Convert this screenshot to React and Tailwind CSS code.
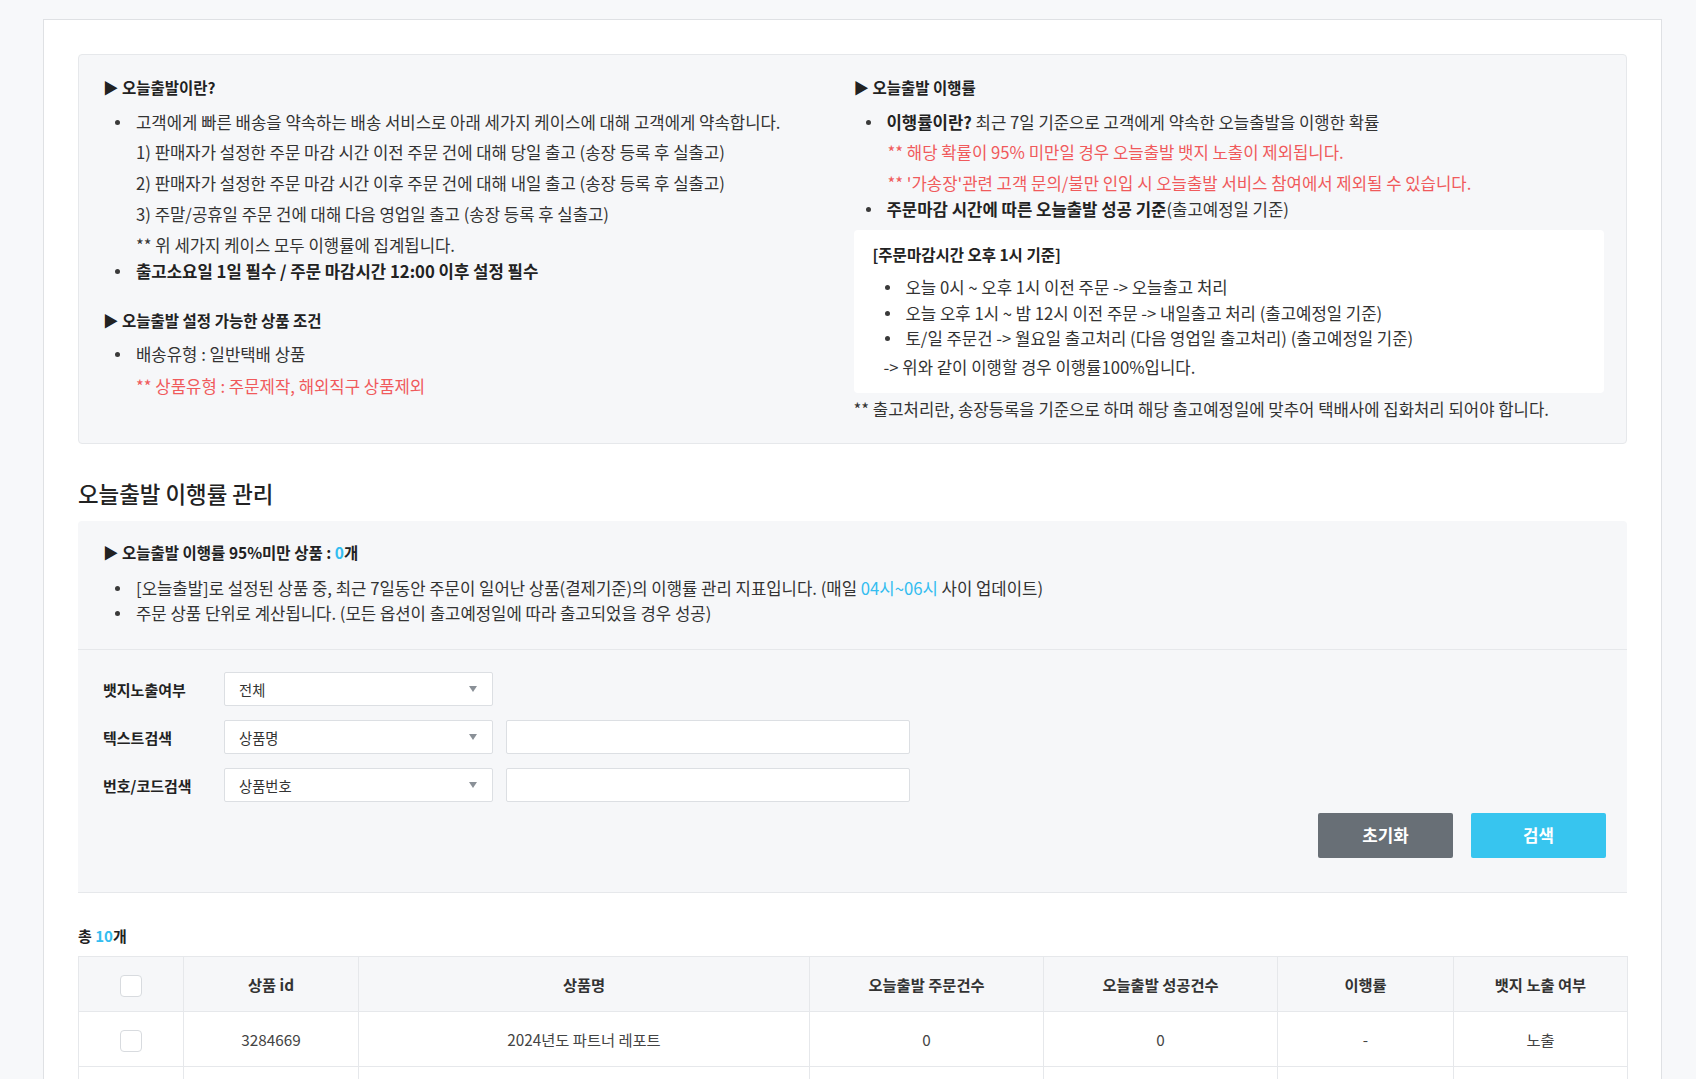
import { useState } from 'react'

const products = [
  { id: '3284669', name: '2024년도 파트너 레포트', orders: 0, success: 0, rate: '-', badge: '노출' },
  { id: '3284512', name: '2024년도 상반기 판매 가이드', orders: 0, success: 0, rate: '-', badge: '노출' },
  { id: '3281107', name: '파트너 교육 자료집', orders: 0, success: 0, rate: '-', badge: '노출' },
  { id: '3279954', name: '시즌 프로모션 키트', orders: 0, success: 0, rate: '-', badge: '노출' },
]

const columns = [
  { w: 'w-[105px]' },
  { w: 'w-[175px]', label: '상품 id' },
  { w: 'w-[451px]', label: '상품명' },
  { w: 'w-[234px]', label: '오늘출발 주문건수' },
  { w: 'w-[234px]', label: '오늘출발 성공건수' },
  { w: 'w-[176px]', label: '이행률' },
  { w: 'w-[174px]', label: '뱃지 노출 여부' },
]

function Bullet({ children, className = '' }) {
  return (
    <li className={`flex items-start ${className}`}>
      <span className="ml-[12px] mr-[16px] mt-[10px] h-[5px] w-[5px] shrink-0 rounded-full bg-[#3a3a3a]" />
      <span>{children}</span>
    </li>
  )
}

function Heading({ children, className = '' }) {
  return <p className={`text-[15.5px] font-bold text-[#222] ${className}`}>▶ {children}</p>
}

function SelectBox({ value }) {
  return (
    <div className="flex h-[34px] w-[269px] shrink-0 items-center justify-between rounded-[2px] border border-[#dcdfe3] bg-white pl-[14px] pr-[15px] text-[14.3px] text-[#333]">
      <span>{value}</span>
      <span className="h-0 w-0 border-x-[4px] border-t-[6px] border-x-transparent border-t-[#8a9097]" />
    </div>
  )
}

function Checkbox({ checked, onChange }) {
  return (
    <input
      type="checkbox"
      checked={checked}
      onChange={onChange}
      className="h-[22px] w-[22px] appearance-none rounded-[4px] border border-[#d8dbdf] bg-white align-middle"
    />
  )
}

export default function App() {
  const [selected, setSelected] = useState([])
  const [keyword, setKeyword] = useState('')
  const [code, setCode] = useState('')

  const toggle = id =>
    setSelected(s => (s.includes(id) ? s.filter(x => x !== id) : [...s, id]))

  return (
    <div className="h-screen overflow-hidden bg-[#f7f8fa] pl-[43px] pr-[34px] pt-[19px] font-['Noto_Sans_CJK_KR','Noto_Sans',sans-serif] text-[16.7px] leading-[25px] text-[#333]">
      <div className="border border-[#dfe1e4] bg-white px-[34px] pt-[34px] pb-[40px]">
        {/* 안내 박스 */}
        <div className="flex rounded-[4px] border border-[#e6e8eb] bg-[#f6f7f9] pl-[24px] pr-[22px] pt-[20px] pb-[21px]">
          <div className="w-1/2">
            <Heading>오늘출발이란?</Heading>
            <ul className="mt-[10px]">
              <Bullet>고객에게 빠른 배송을 약속하는 배송 서비스로 아래 세가지 케이스에 대해 고객에게 약속합니다.</Bullet>
            </ul>
            <div className="pl-[33px]">
              <p className="mt-[5px]">1) 판매자가 설정한 주문 마감 시간 이전 주문 건에 대해 당일 출고 (송장 등록 후 실출고)</p>
              <p className="mt-[6px]">2) 판매자가 설정한 주문 마감 시간 이후 주문 건에 대해 내일 출고 (송장 등록 후 실출고)</p>
              <p className="mt-[6px]">3) 주말/공휴일 주문 건에 대해 다음 영업일 출고 (송장 등록 후 실출고)</p>
              <p className="mt-[6px]">** 위 세가지 케이스 모두 이행률에 집계됩니다.</p>
            </div>
            <ul className="mt-[1px]">
              <Bullet className="font-bold text-[#222]">출고소요일 1일 필수 / 주문 마감시간 12:00 이후 설정 필수</Bullet>
            </ul>
            <Heading className="mt-[24px]">오늘출발 설정 가능한 상품 조건</Heading>
            <ul className="mt-[9px]">
              <Bullet>배송유형 : 일반택배 상품</Bullet>
            </ul>
            <p className="mt-[7px] pl-[33px] text-[#f05a5c]">** 상품유형 : 주문제작, 해외직구 상품제외</p>
          </div>

          <div className="w-1/2">
            <Heading>오늘출발 이행률</Heading>
            <ul className="mt-[10px]">
              <Bullet>
                <b className="text-[#222]">이행률이란?</b> 최근 7일 기준으로 고객에게 약속한 오늘출발을 이행한 확률
              </Bullet>
            </ul>
            <div className="pl-[34px] text-[#f05a5c]">
              <p className="mt-[5px]">** 해당 확률이 95% 미만일 경우 오늘출발 뱃지 노출이 제외됩니다.</p>
              <p className="mt-[6px]">** &apos;가송장&apos;관련 고객 문의/불만 인입 시 오늘출발 서비스 참여에서 제외될 수 있습니다.</p>
            </div>
            <ul className="mt-[1px]">
              <Bullet>
                <b className="text-[#222]">주문마감 시간에 따른 오늘출발 성공 기준</b>(출고예정일 기준)
              </Bullet>
            </ul>
            <div className="mt-[8px] rounded-[4px] bg-white px-[19px] pt-[12px] pb-[13px]">
              <p className="text-[15.5px] font-bold text-[#222]">[주문마감시간 오후 1시 기준]</p>
              <ul className="mt-[8px]">
                <Bullet>오늘 0시 ~ 오후 1시 이전 주문 -&gt; 오늘출고 처리</Bullet>
                <Bullet className="mt-[1px]">오늘 오후 1시 ~ 밤 12시 이전 주문 -&gt; 내일출고 처리 (출고예정일 기준)</Bullet>
                <Bullet>토/일 주문건 -&gt; 월요일 출고처리 (다음 영업일 출고처리) (출고예정일 기준)</Bullet>
              </ul>
              <p className="mt-[4px] pl-[11px]">-&gt; 위와 같이 이행할 경우 이행률100%입니다.</p>
            </div>
            <p className="mt-[4px]">** 출고처리란, 송장등록을 기준으로 하며 해당 출고예정일에 맞추어 택배사에 집화처리 되어야 합니다.</p>
          </div>
        </div>

        <h2 className="mt-[34px] text-[22.4px] font-medium leading-[30px] text-[#222]">오늘출발 이행률 관리</h2>

        {/* 검색 영역 */}
        <div className="mt-[13px] rounded-t-[4px] border-b border-[#e6e8eb] bg-[#f6f7f9]">
          <div className="border-b border-[#e6e8eb] px-[25px] pt-[19px] pb-[23px]">
            <Heading>
              오늘출발 이행률 95%미만 상품 : <span className="text-[#33bdf0]">0</span>개
            </Heading>
            <ul className="mt-[11px]">
              <Bullet>
                [오늘출발]로 설정된 상품 중, 최근 7일동안 주문이 일어난 상품(결제기준)의 이행률 관리 지표입니다. (매일{' '}
                <span className="text-[#33bdf0]">04시~06시</span> 사이 업데이트)
              </Bullet>
              <Bullet>주문 상품 단위로 계산됩니다. (모든 옵션이 출고예정일에 따라 출고되었을 경우 성공)</Bullet>
            </ul>
          </div>

          <div className="pl-[25px] pr-[21px] pt-[22px] pb-[34px] text-[15px]">
            <div className="flex flex-col gap-[14px]">
              <div className="flex items-center">
                <span className="w-[121px] font-bold text-[#222]">뱃지노출여부</span>
                <SelectBox value="전체" />
              </div>
              <div className="flex items-center gap-[13px]">
                <span className="-mr-[13px] w-[121px] font-bold text-[#222]">텍스트검색</span>
                <SelectBox value="상품명" />
                <input
                  value={keyword}
                  onChange={e => setKeyword(e.target.value)}
                  className="h-[34px] w-[404px] rounded-[2px] border border-[#dcdfe3] bg-white px-3 text-[14px] outline-none"
                />
              </div>
              <div className="flex items-center gap-[13px]">
                <span className="-mr-[13px] w-[121px] font-bold text-[#222]">번호/코드검색</span>
                <SelectBox value="상품번호" />
                <input
                  value={code}
                  onChange={e => setCode(e.target.value)}
                  className="h-[34px] w-[404px] rounded-[2px] border border-[#dcdfe3] bg-white px-3 text-[14px] outline-none"
                />
              </div>
            </div>
            <div className="mt-[11px] flex justify-end gap-[18px]">
              <button className="h-[45px] w-[135px] rounded-[2px] bg-[#686f76] text-[16.8px] font-bold text-white">초기화</button>
              <button className="h-[45px] w-[135px] rounded-[2px] bg-[#37c5ef] text-[16.8px] font-bold text-white">검색</button>
            </div>
          </div>
        </div>

        <p className="mt-[30px] text-[15px] font-bold text-[#222]">
          총 <span className="text-[#33bdf0]">10</span>개
        </p>

        <table className="mt-[8px] w-full table-fixed border-collapse text-center text-[15.3px]">
          <colgroup>
            {columns.map((c, i) => (
              <col key={i} className={c.w} />
            ))}
          </colgroup>
          <thead>
            <tr className="h-[55px] bg-[#f6f7f9]">
              {columns.map((c, i) => (
                <th key={i} className="border border-[#e6e8eb] font-bold text-[#333]">
                  {i === 0 ? (
                    <Checkbox
                      checked={selected.length === products.length}
                      onChange={() => setSelected(selected.length === products.length ? [] : products.map(p => p.id))}
                    />
                  ) : (
                    c.label
                  )}
                </th>
              ))}
            </tr>
          </thead>
          <tbody>
            {products.map(p => (
              <tr key={p.id} className="h-[55px] text-[#444]">
                <td className="border border-[#e6e8eb]">
                  <Checkbox checked={selected.includes(p.id)} onChange={() => toggle(p.id)} />
                </td>
                <td className="border border-[#e6e8eb]">{p.id}</td>
                <td className="border border-[#e6e8eb]">{p.name}</td>
                <td className="border border-[#e6e8eb]">{p.orders}</td>
                <td className="border border-[#e6e8eb]">{p.success}</td>
                <td className="border border-[#e6e8eb]">{p.rate}</td>
                <td className="border border-[#e6e8eb]">{p.badge}</td>
              </tr>
            ))}
          </tbody>
        </table>
      </div>
    </div>
  )
}
